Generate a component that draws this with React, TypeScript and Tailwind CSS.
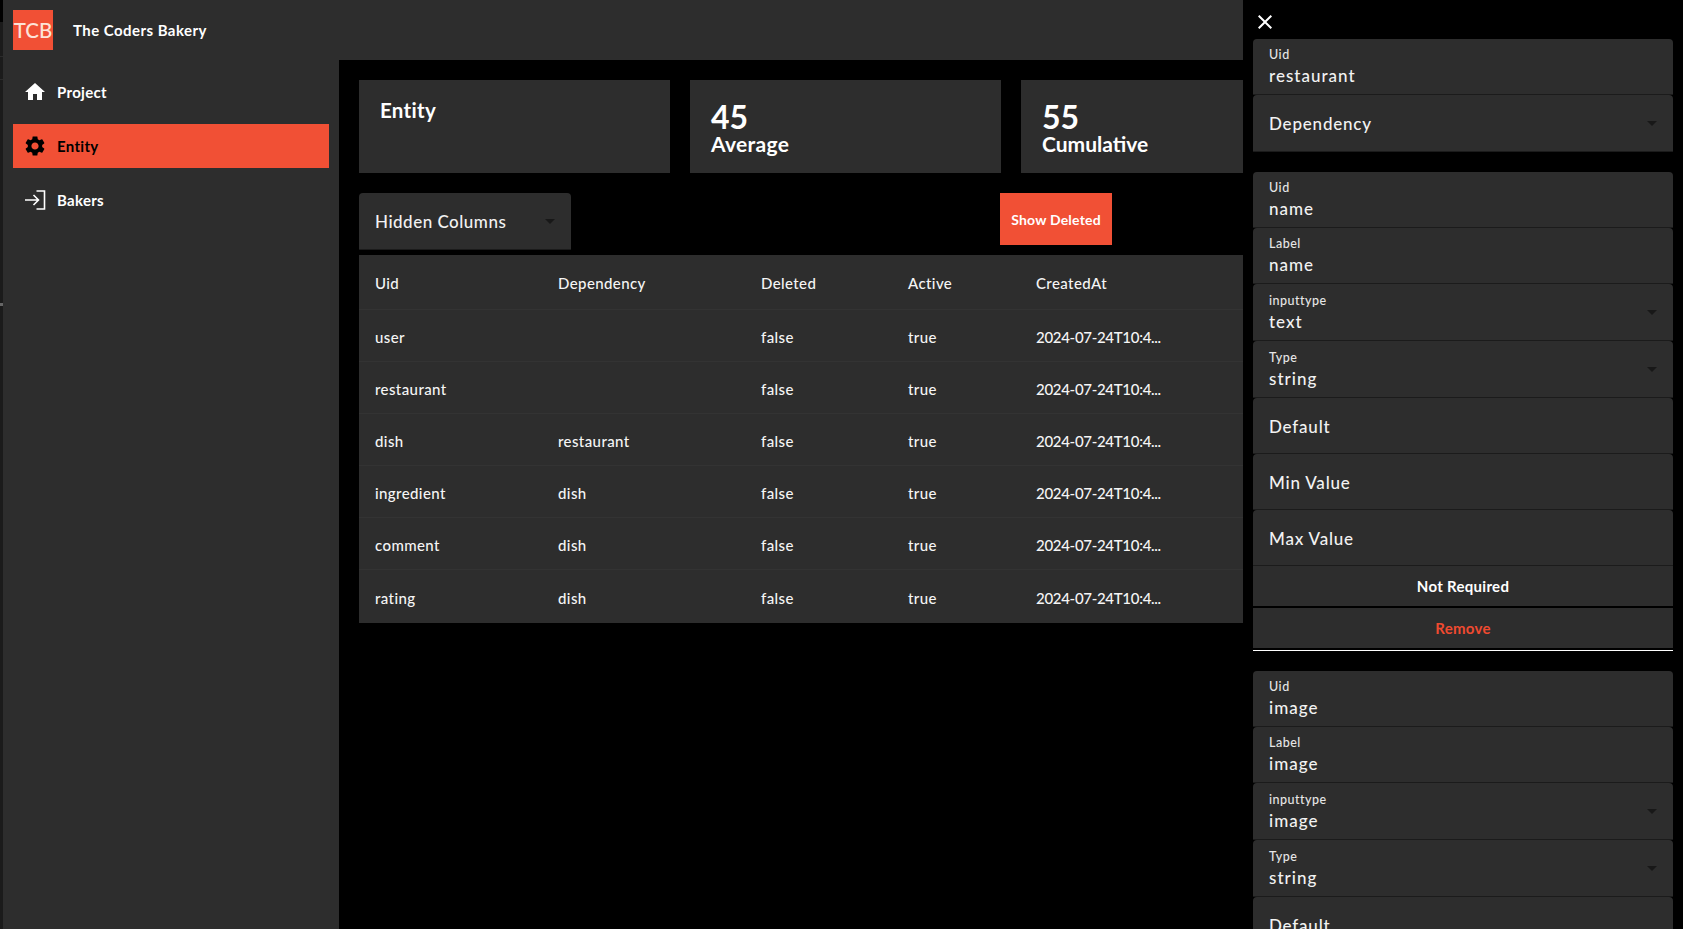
import { ReactNode } from "react";

const rows = [
  ["user", "", "false", "true", "2024-07-24T10:4..."],
  ["restaurant", "", "false", "true", "2024-07-24T10:4..."],
  ["dish", "restaurant", "false", "true", "2024-07-24T10:4..."],
  ["ingredient", "dish", "false", "true", "2024-07-24T10:4..."],
  ["comment", "dish", "false", "true", "2024-07-24T10:4..."],
  ["rating", "dish", "false", "true", "2024-07-24T10:4..."],
];

function DropArrow({ className }: { className: string }) {
  return (
    <svg viewBox="0 0 24 24" className={className} fill="currentColor">
      <path d="M7 10l5 5 5-5z" />
    </svg>
  );
}

function NavItem({ icon, label, active }: { icon: ReactNode; label: string; active?: boolean }) {
  return (
    <div
      className={`flex h-[44px] items-center pl-[10px] ${
        active ? "bg-[#f15035] text-black" : "text-white"
      }`}
    >
      <span className="flex w-[34px] shrink-0">{icon}</span>
      <span className="text-[15px] font-bold tracking-[0.3px]">{label}</span>
    </div>
  );
}

// filled input, label floats above the value when there is one
function Field({ label, value, select }: { label?: string; value: string; select?: boolean }) {
  return (
    <div
      className={`relative flex shrink-0 flex-col justify-center rounded-t border-b border-[#1b1b1b] bg-[#2d2d2d] px-4 ${
        select ? "h-[57px]" : "h-[56px]"
      }`}
    >
      {label ? (
        <>
          <div className="text-[12.5px] leading-[16px] font-medium tracking-[0.5px] text-[#e6e6e6]">{label}</div>
          <div className="mt-[3px] text-[17px] leading-[20px] font-medium tracking-[1px] text-[#f2f2f2]">{value}</div>
        </>
      ) : (
        <div className="pt-[2px] text-[17px] leading-[20px] font-medium tracking-[0.8px] text-[#f2f2f2]">{value}</div>
      )}
      {select && <DropArrow className="absolute top-1/2 right-[9px] h-6 w-6 -translate-y-1/2 text-[#181818]" />}
    </div>
  );
}

function AttributeGroup({ name, input, type, cut }: { name: string; input: string; type: string; cut?: boolean }) {
  return (
    <div className="flex shrink-0 flex-col">
      <Field label="Uid" value={name} />
      <Field label="Label" value={name} />
      <Field label="inputtype" value={input} select />
      <Field label="Type" value={type} select />
      <Field value="Default" />
      {!cut && (
        <>
          <Field value="Min Value" />
          <Field value="Max Value" />
          <button className="flex h-[40px] shrink-0 items-center justify-center bg-[#2d2d2d] text-[15px] font-bold tracking-[0.3px] text-white">
            Not Required
          </button>
          <button className="mt-[2px] flex h-[40px] shrink-0 items-center justify-center bg-[#2d2d2d] text-[15px] font-bold tracking-[0.3px] text-[#f04a30]">
            Remove
          </button>
          <div className="mt-[2px] h-px bg-white" />
        </>
      )}
    </div>
  );
}

export default function App() {
  return (
    <div className="flex h-screen w-full overflow-hidden bg-black font-['Lato',sans-serif]">
      <div className="flex w-[3px] shrink-0 flex-col bg-[#1b1b1b]">
        <div className="h-[22px] bg-black" />
        <div className="mt-[34px] h-px bg-[#2b2b2b]" />
        <div className="mt-[22px] h-px bg-[#2b2b2b]" />
        <div className="mt-[223px] h-[3px] bg-[#666666]" />
      </div>

      <div className="flex w-[1240px] shrink-0 flex-col overflow-hidden">
        <header className="flex h-[60px] shrink-0 items-center bg-[#2d2d2d] pl-[10px]">
          <div className="flex h-[40px] w-[40px] items-center justify-center bg-[#f15035] text-[20.5px] leading-none font-medium text-[#fde3d8]">
            TCB
          </div>
          <div className="ml-[20px] text-[15px] font-bold tracking-[0.45px] text-white">The Coders Bakery</div>
        </header>

        <div className="flex min-h-0 flex-1">
          <aside className="flex w-[336px] shrink-0 flex-col gap-[10px] bg-[#2d2d2d] px-[10px] pt-[10px]">
            <NavItem
              label="Project"
              icon={
                <svg viewBox="0 0 24 24" className="h-6 w-6" fill="currentColor">
                  <path d="M10 20v-6h4v6h5v-8h3L12 3 2 12h3v8z" />
                </svg>
              }
            />
            <NavItem
              active
              label="Entity"
              icon={
                <svg viewBox="0 0 24 24" className="h-6 w-6" fill="currentColor">
                  <path d="M19.14 12.94c.04-.3.06-.61.06-.94 0-.32-.02-.64-.07-.94l2.03-1.58c.18-.14.23-.41.12-.61l-1.92-3.32c-.12-.22-.37-.29-.59-.22l-2.39.96c-.5-.38-1.03-.7-1.62-.94l-.36-2.54c-.04-.24-.24-.41-.48-.41h-3.84c-.24 0-.43.17-.47.41l-.36 2.54c-.59.24-1.13.57-1.62.94l-2.39-.96c-.22-.08-.47 0-.59.22L2.74 8.87c-.12.21-.08.47.12.61l2.03 1.58c-.05.3-.09.63-.09.94s.02.64.07.94l-2.03 1.58c-.18.14-.23.41-.12.61l1.92 3.32c.12.22.37.29.59.22l2.39-.96c.5.38 1.03.7 1.62.94l.36 2.54c.05.24.24.41.48.41h3.84c.24 0 .44-.17.47-.41l.36-2.54c.59-.24 1.13-.56 1.62-.94l2.39.96c.22.08.47 0 .59-.22l1.92-3.32c.12-.22.07-.47-.12-.61l-2.01-1.58zM12 15.6c-1.98 0-3.6-1.62-3.6-3.6s1.62-3.6 3.6-3.6 3.6 1.62 3.6 3.6-1.62 3.6-3.6 3.6z" />
                </svg>
              }
            />
            <NavItem
              label="Bakers"
              icon={
                <svg viewBox="0 0 24 24" className="h-6 w-6" fill="none" stroke="currentColor" strokeWidth="1.6">
                  <path d="M2 12h13.5M10.5 7l5 5-5 5M13.5 3h8v18h-8" />
                </svg>
              }
            />
          </aside>

          <main className="min-w-0 flex-1 overflow-hidden p-5">
            <div className="flex gap-5">
              <div className="h-[93px] w-[311px] shrink-0 bg-[#2d2d2d] px-[21px] pt-[15px] text-[20.5px] leading-[30px] font-bold tracking-[0.3px] text-white">
                Entity
              </div>
              <div className="flex h-[93px] w-[311px] shrink-0 flex-col bg-[#2d2d2d] px-[21px] pt-[20px] font-bold text-white">
                <div className="text-[32px] leading-[33px]">45</div>
                <div className="text-[21px] leading-[21px] tracking-[0.3px]">Average</div>
              </div>
              <div className="flex h-[93px] w-[311px] shrink-0 flex-col bg-[#2d2d2d] px-[21px] pt-[20px] font-bold text-white">
                <div className="text-[32px] leading-[33px]">55</div>
                <div className="text-[21px] leading-[21px]">Cumulative</div>
              </div>
            </div>

            <div className="mt-5 flex items-start">
              <div className="relative flex h-[57px] w-[212px] items-center rounded-t border-b border-[#1b1b1b] bg-[#2d2d2d] pt-[2px] pl-4 text-[17px] font-medium tracking-[0.5px] text-[#f2f2f2]">
                Hidden Columns
                <DropArrow className="absolute top-1/2 right-[9px] h-6 w-6 -translate-y-1/2 text-[#181818]" />
              </div>
              <button className="ml-[429px] flex h-[52px] w-[112px] items-center justify-center bg-[#f15035] text-[14px] font-bold tracking-[0.2px] text-white">
                Show Deleted
              </button>
            </div>

            <table className="mt-[5px] w-[884px] table-fixed border-separate border-spacing-0 bg-[#2d2d2d] text-left text-[15px] font-medium tracking-[0.4px] text-[#f5f5f5]">
              <colgroup>
                <col className="w-[183px]" />
                <col className="w-[203px]" />
                <col className="w-[147px]" />
                <col className="w-[128px]" />
                <col />
              </colgroup>
              <thead>
                <tr className="h-[55px]">
                  {["Uid", "Dependency", "Deleted", "Active", "CreatedAt"].map((h) => (
                    <th key={h} className="border-b border-[#333333] px-4 pt-[2px] font-medium">
                      {h}
                    </th>
                  ))}
                </tr>
              </thead>
              <tbody>
                {rows.map((row, i) => (
                  <tr key={row[0]} className={i < rows.length - 1 ? "h-[52px]" : "h-[53px]"}>
                    {row.map((cell, j) => (
                      <td
                        key={j}
                        className={`px-4 pt-[3px] ${i < rows.length - 1 ? "border-b border-[#333333]" : ""} ${
                          j === 4 ? "tracking-[-0.3px]" : ""
                        }`}
                      >
                        {cell}
                      </td>
                    ))}
                  </tr>
                ))}
              </tbody>
            </table>
          </main>
        </div>
      </div>

      <aside className="flex min-w-0 flex-1 flex-col overflow-hidden px-[10px] pt-[10px]">
        <svg viewBox="0 0 24 24" className="h-6 w-6 shrink-0 text-white" fill="currentColor">
          <path d="M19 6.41 17.59 5 12 10.59 6.41 5 5 6.41 10.59 12 5 17.59 6.41 19 12 13.41 17.59 19 19 17.59 13.41 12 19 6.41z" />
        </svg>
        <div className="mt-[5px] flex shrink-0 flex-col">
          <Field label="Uid" value="restaurant" />
          <Field value="Dependency" select />
        </div>
        <div className="mt-5 flex shrink-0 flex-col gap-5">
          <AttributeGroup name="name" input="text" type="string" />
          <AttributeGroup name="image" input="image" type="string" cut />
        </div>
      </aside>
    </div>
  );
}
